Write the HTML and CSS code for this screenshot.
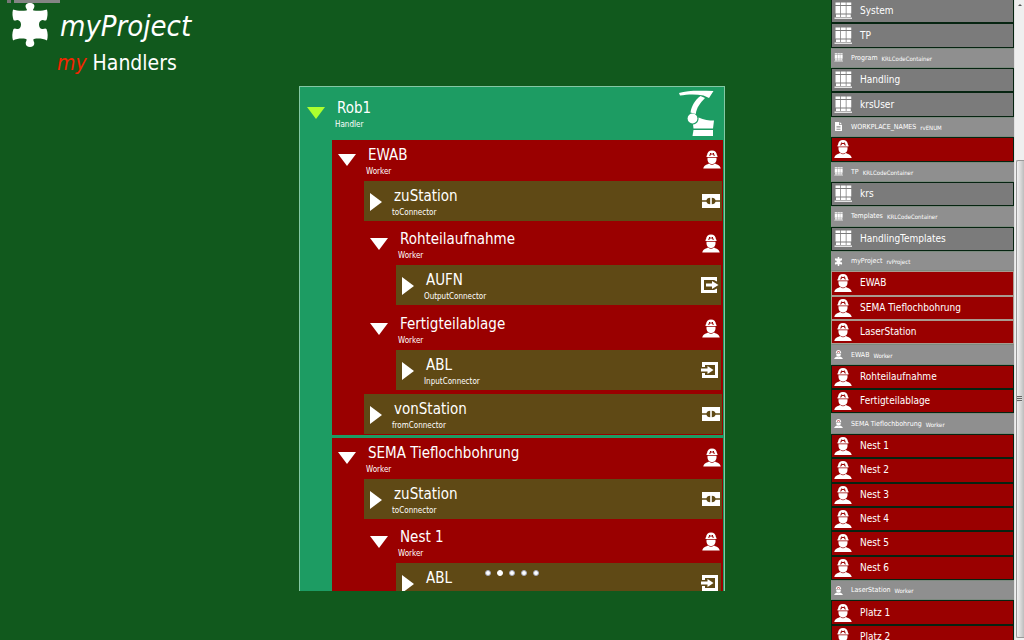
FILE: index.html
```html
<!DOCTYPE html>
<html lang="en">
<head>
<meta charset="utf-8">
<title>myProject - my Handlers</title>
<link rel="stylesheet" href="styles.css">
</head>
<body>
<svg class="sprite" aria-hidden="true">
  <symbol id="worker" viewBox="0 0 36 36">
    <path d="M18 0C12 0 8.500 4 8.200 9L7 11V13H29V11L27.800 9C27.500 4 24 0 18 0Z"/>
    <path d="M9 14.500H27V18C27 23.500 22.500 27 18 27S9 23.500 9 18Z"/>
    <path d="M12.500 26C9 28 2 28.500 .5 36H35.500C34 28.500 27 28 23.500 26C20.500 29.500 15.500 29.500 12.500 26Z"/>
    <path class="mark" d="M13.500 11L15.300 5M22.500 11L20.700 5M15 9L18 6L21 9"/>
  </symbol>
  <symbol id="books" viewBox="0 0 36 36">
    <path d="M3 1H12.500V6H3ZM14 1H23.500V6H14ZM25 1H34.500V6H25ZM3 8H12.500V23H3ZM14 8H23.500V23H14ZM25 8H34.500V23H25ZM4 25H12.500V30H4ZM14 25H23.500V30H14ZM25 25H33.500V30H25Z"/>
    <path opacity=".8" d="M1 31H36V34H1Z"/>
  </symbol>
  <symbol id="page" viewBox="0 0 16 18">
    <path fill-rule="evenodd" d="M1 0H9V6H15V18H1ZM4 8V9.500H12V8ZM4 11V12.500H12V11ZM4 14V15.500H12V14ZM10.500 0L15 4.500H10.500Z"/>
  </symbol>
  <symbol id="puzzle" viewBox="0 0 36 44">
    <path d="M1 6.500C5 8 10 8 14.500 7.500C15.500 6.800 14.500 6 14 5C12.500 1.500 15 0 18 0S23.500 1.500 22 5C21.500 6 20.500 6.800 21.500 7.500C26 8 31 8 35 6.500C36 10 35.500 14 34.500 17C33.500 18 32.500 17.500 31 17C28.500 16.700 27 19 27 21.500S28.500 26.500 31 26C32.500 25.500 33.500 25 34.500 26C36 30 36 34 35 37.500C31 35.500 26 35 22 36C20.500 36.700 22 38 22.300 40C22.500 42.500 20.500 44 18 44S13.500 42.500 13.700 40C14 38 15.500 36.700 14 36C10 35 5 35.500 1 37.500C0 34 0 30 1.500 26C2.500 25 3.500 25.500 5 26C7.500 26.500 9 24 9 21.500S7.500 16.700 5 17C3.500 17.500 2.500 18 1.500 17C.5 14 0 10 1 6.500Z"/>
  </symbol>
  <symbol id="robot" viewBox="0 0 36 47">
    <path d="M0 3C9 0 22 .8 34.500 1L30 8L24.500 5.500C16 3.800 8 4.500 1 5.500Z"/>
    <path d="M21.500 6L26 8C21 13 17.500 18 16.800 24L11.500 22.500C12.500 16 16 10 21.500 6Z"/>
    <circle cx="13.500" cy="28.500" r="4.900"/>
    <path d="M19.500 27.500C25 30 30 30.500 35 30.500L34 38.500H14.500L14 34.500C18 34 20 31 19.500 27.500Z"/>
    <path d="M14.500 40H34V46H13.500Z"/>
  </symbol>
  <symbol id="link" viewBox="0 0 18 14">
    <path d="M0 0H18V14H0Z"/>
    <path class="plugs" d="M8.200 3.700C6.300 3.700 5 4.500 4.400 6.200H0V7.800H4.400C5 9.500 6.300 10.300 8.200 10.300ZM9.800 3.700C11.700 3.700 13 4.500 13.600 6.200H18V7.800H13.600C13 9.500 11.700 10.300 9.800 10.300Z"/>
  </symbol>
  <symbol id="output" viewBox="0 0 18 16">
    <path d="M0 0H16V4.500L13 3H3V13H13L16 11.500V16H0Z"/>
    <path d="M5 6.500H11V4L17.500 8L11 12V9.500H5Z"/>
  </symbol>
  <symbol id="input" viewBox="0 0 18 16">
    <path d="M1 0H17V16H1V11H4V13H14V3H4V5H1Z"/>
    <path d="M0 6.500H6.500V4L12.500 8L6.500 12V9.500H0Z"/>
  </symbol>
</svg>

<div class="app">
  <header class="title">
    <div class="tabs"><span class="tab-stub"></span><span class="tab"></span></div>
    <div class="project">
      <svg class="logo" aria-hidden="true"><use href="#puzzle"/></svg>
      <h1>myProject</h1>
    </div>
    <h2><em>my</em> Handlers</h2>
  </header>

  <main class="stage">
    <div class="tree">
      <div class="root-head">
        <button class="toggle open lime" aria-label="Collapse Rob1"></button>
        <div class="label"><b>Rob1</b><small>Handler</small></div>
        <svg class="robot" aria-hidden="true"><use href="#robot"/></svg>
      </div>
      <ul class="root-list">
        <li class="worker">
          <div class="head"><button class="toggle open" aria-label="Collapse EWAB"></button><div class="label"><b>EWAB</b><small>Worker</small></div><svg class="icon-worker"><use href="#worker"/></svg></div>
          <ul>
            <li class="connector"><button class="toggle" aria-label="Expand zuStation"></button><div class="label"><b>zuStation</b><small>toConnector</small></div><svg class="icon-link"><use href="#link"/></svg></li>
            <li class="worker">
              <div class="head"><button class="toggle open" aria-label="Collapse Rohteilaufnahme"></button><div class="label"><b>Rohteilaufnahme</b><small>Worker</small></div><svg class="icon-worker"><use href="#worker"/></svg></div>
              <ul>
                <li class="connector"><button class="toggle" aria-label="Expand AUFN"></button><div class="label"><b>AUFN</b><small>OutputConnector</small></div><svg class="icon-port"><use href="#output"/></svg></li>
              </ul>
            </li>
            <li class="worker">
              <div class="head"><button class="toggle open" aria-label="Collapse Fertigteilablage"></button><div class="label"><b>Fertigteilablage</b><small>Worker</small></div><svg class="icon-worker"><use href="#worker"/></svg></div>
              <ul>
                <li class="connector"><button class="toggle" aria-label="Expand ABL"></button><div class="label"><b>ABL</b><small>InputConnector</small></div><svg class="icon-port"><use href="#input"/></svg></li>
              </ul>
            </li>
            <li class="connector"><button class="toggle" aria-label="Expand vonStation"></button><div class="label"><b>vonStation</b><small>fromConnector</small></div><svg class="icon-link"><use href="#link"/></svg></li>
          </ul>
        </li>
        <li class="worker">
          <div class="head"><button class="toggle open" aria-label="Collapse SEMA Tieflochbohrung"></button><div class="label"><b>SEMA Tieflochbohrung</b><small>Worker</small></div><svg class="icon-worker"><use href="#worker"/></svg></div>
          <ul>
            <li class="connector"><button class="toggle" aria-label="Expand zuStation"></button><div class="label"><b>zuStation</b><small>toConnector</small></div><svg class="icon-link"><use href="#link"/></svg></li>
            <li class="worker">
              <div class="head"><button class="toggle open" aria-label="Collapse Nest 1"></button><div class="label"><b>Nest 1</b><small>Worker</small></div><svg class="icon-worker"><use href="#worker"/></svg></div>
              <ul>
                <li class="connector"><button class="toggle" aria-label="Expand ABL"></button><div class="label"><b>ABL</b></div><svg class="icon-port"><use href="#input"/></svg></li>
              </ul>
            </li>
          </ul>
        </li>
      </ul>
    </div>
    <nav class="pager" aria-label="Pages">
      <button aria-label="Page 1"></button><button class="current" aria-label="Page 2"></button><button aria-label="Page 3"></button><button aria-label="Page 4"></button><button aria-label="Page 5"></button>
    </nav>
  </main>

  <aside class="side">
    <ul class="list">
      <li class="item"><svg><use href="#books"/></svg>System</li>
      <li class="item"><svg><use href="#books"/></svg>TP</li>
      <li class="group"><svg><use href="#books"/></svg>Program<small>KRLCodeContainer</small></li>
      <li class="item"><svg><use href="#books"/></svg>Handling</li>
      <li class="item"><svg><use href="#books"/></svg>krsUser</li>
      <li class="group"><svg><use href="#page"/></svg>WORKPLACE_NAMES<small>rvENUM</small></li>
      <li class="item red"><svg><use href="#worker"/></svg></li>
      <li class="group"><svg><use href="#books"/></svg>TP<small>KRLCodeContainer</small></li>
      <li class="item"><svg><use href="#books"/></svg>krs</li>
      <li class="group"><svg><use href="#books"/></svg>Templates<small>KRLCodeContainer</small></li>
      <li class="item"><svg><use href="#books"/></svg>HandlingTemplates</li>
      <li class="group"><svg><use href="#puzzle"/></svg>myProject<small>rvProject</small></li>
      <li class="item red selected"><svg><use href="#worker"/></svg>EWAB</li>
      <li class="item red selected"><svg><use href="#worker"/></svg>SEMA Tieflochbohrung</li>
      <li class="item red selected"><svg><use href="#worker"/></svg>LaserStation</li>
      <li class="group"><svg><use href="#worker"/></svg>EWAB<small>Worker</small></li>
      <li class="item red"><svg><use href="#worker"/></svg>Rohteilaufnahme</li>
      <li class="item red"><svg><use href="#worker"/></svg>Fertigteilablage</li>
      <li class="group"><svg><use href="#worker"/></svg>SEMA Tieflochbohrung<small>Worker</small></li>
      <li class="item red"><svg><use href="#worker"/></svg>Nest 1</li>
      <li class="item red"><svg><use href="#worker"/></svg>Nest 2</li>
      <li class="item red"><svg><use href="#worker"/></svg>Nest 3</li>
      <li class="item red"><svg><use href="#worker"/></svg>Nest 4</li>
      <li class="item red"><svg><use href="#worker"/></svg>Nest 5</li>
      <li class="item red"><svg><use href="#worker"/></svg>Nest 6</li>
      <li class="group"><svg><use href="#worker"/></svg>LaserStation<small>Worker</small></li>
      <li class="item red"><svg><use href="#worker"/></svg>Platz 1</li>
      <li class="item red"><svg><use href="#worker"/></svg>Platz 2</li>
    </ul>
    <div class="scrollbar"><span class="up"></span><div class="thumb"><span class="grip"></span></div></div>
  </aside>
</div>
</body>
</html>
```

FILE: styles.css
```css
* { box-sizing: border-box; }

body {
  margin: 0;
  background: #11591d;
  color: #fff;
  font-family: "DejaVu Sans Condensed", Tahoma, sans-serif;
}

ul { list-style: none; margin: 0; padding: 0; }
button { padding: 0; border: 0; background: none; cursor: pointer; }
svg { fill: #fff; flex: none; }
.sprite { position: absolute; width: 0; height: 0; }
.mark { fill: none; stroke: #9a0000; stroke-width: 2; }
.plugs { fill: #5f4915; }

.app {
  display: grid;
  grid-template-columns: 1fr minmax(0, 426px) 1fr;
  height: 100vh;
  overflow: hidden;
}

/* Title block */
.title { min-width: 0; white-space: nowrap; }
.tabs { display: flex; gap: 3px; height: 3px; padding-left: 7px; }
.tab-stub { width: 4px; background: #777; }
.tab { width: 46px; background: #858585; }
.project { display: flex; align-items: center; gap: 12px; padding-left: 12px; }
.logo { width: 36px; height: 44px; }
h1 { margin: 0; padding-top: 2px; font-size: 29px; line-height: 42px; font-weight: 400; font-style: italic; }
h2 { margin: 0; padding: 3px 0 0 57px; font-size: 21px; line-height: 26px; font-weight: 400; }
h2 em { color: #f42500; }

/* Handler tree */
.stage { position: relative; min-width: 0; padding: 86px 0 49px; height: 100vh; }
.tree {
  height: 100%;
  overflow: hidden;
  background: #1d9c63;
  border: 1px solid #84c8a4;
  border-bottom: 0;
}
.root-head { display: flex; height: 53px; padding: 3px 9px 0 7px; }
.root-head .toggle { margin: 17px 12px 0 0; }
.root-head .label { padding-top: 9px; }
.robot { width: 36px; height: 47px; }
.root-list { padding: 0 1px 0 32px; }
.root-list, .worker > ul { display: flex; flex-direction: column; gap: 3px; }
.worker { background: #9a0000; padding: 0 1px 1px 0; }
.worker > ul { padding-left: 32px; }
.head { display: flex; height: 41px; padding-left: 6px; }
.head .toggle { margin: 14px 12px 0 0; }
.head .label { padding-top: 6px; }
.connector { display: flex; height: 40px; padding-left: 6px; background: #5f4915; }
.connector .toggle { margin: 12px 12px 0 0; }
.connector .label { padding-top: 6px; }

.toggle { flex: none; width: 12px; height: 18px; background: #fff; clip-path: polygon(0 0, 100% 50%, 0 100%); }
.toggle.open { width: 18px; height: 12px; clip-path: polygon(0 0, 100% 0, 50% 100%); }
.toggle.lime { background: #adff2f; }

.label { flex: 1; min-width: 0; white-space: nowrap; }
.label b { display: block; font-size: 15px; line-height: 19px; font-weight: 400; }
.label small { display: block; margin-left: -2px; font-size: 8px; line-height: 14px; }

.icon-worker { width: 18px; height: 19px; margin: 10px 1px 0 0; }
.icon-link { width: 18px; height: 14px; margin: 13px 2px 0 0; }
.icon-port { width: 18px; height: 16px; margin: 12px 2px 0 0; }

.pager { position: absolute; left: 0; right: 0; bottom: 62px; display: flex; justify-content: center; align-items: center; gap: 6px; height: 10px; }
.pager button { width: 6px; height: 6px; border-radius: 50%; background: #fff; border: 1px solid #a3a6b8; }
.pager .current { border-color: #fff; }

/* Container list */
.side { justify-self: end; display: flex; width: 193px; height: 100vh; overflow: hidden; }
.list { flex: 1; display: flex; flex-direction: column; height: calc(100vh + 10px); margin-top: -1px; }
.item, .group { display: flex; align-items: center; white-space: nowrap; border: 1px solid #062411; }
.item { flex: 1 0 24px; padding-left: 2px; gap: 8px; font-size: 10px; line-height: 14px; background: #7b7b7b; }
.item svg { width: 18px; height: 18px; }
.item.red { background: #9a0000; }
.item.selected { border-color: #a99b90; }
.group { flex: 1 0 20px; padding-left: 2px; font-size: 7px; line-height: 10px; background: #8f8f8f; border-color: #7c8a7f #8f8f8f; }
.group svg { width: 9px; height: 9px; margin-right: 8px; }
.group .mark { stroke: #8f8f8f; }
.group small { margin: 2px 0 0 4px; font-size: 6px; }

.scrollbar { width: 10px; padding: 0 0 2px 1px; display: flex; flex-direction: column; background: #efefef; border-left: 1px solid #e2e2e2; }
.up { height: 160px; padding: 4px 0 0 2px; }
.up::before { content: ""; display: block; width: 4px; height: 2px; background: #555; clip-path: polygon(50% 0, 100% 100%, 0 100%); }
.thumb { flex: 1; display: flex; align-items: center; border: 1px solid #999; border-right: 0; border-radius: 2px 0 0 2px; background: linear-gradient(90deg, #f2f2f2, #dcdcdc 45%, #bdbdbd); }
.grip { width: 5px; height: 6px; background: repeating-linear-gradient(#666 0 1px, #ddd 1px 2px); }
```
